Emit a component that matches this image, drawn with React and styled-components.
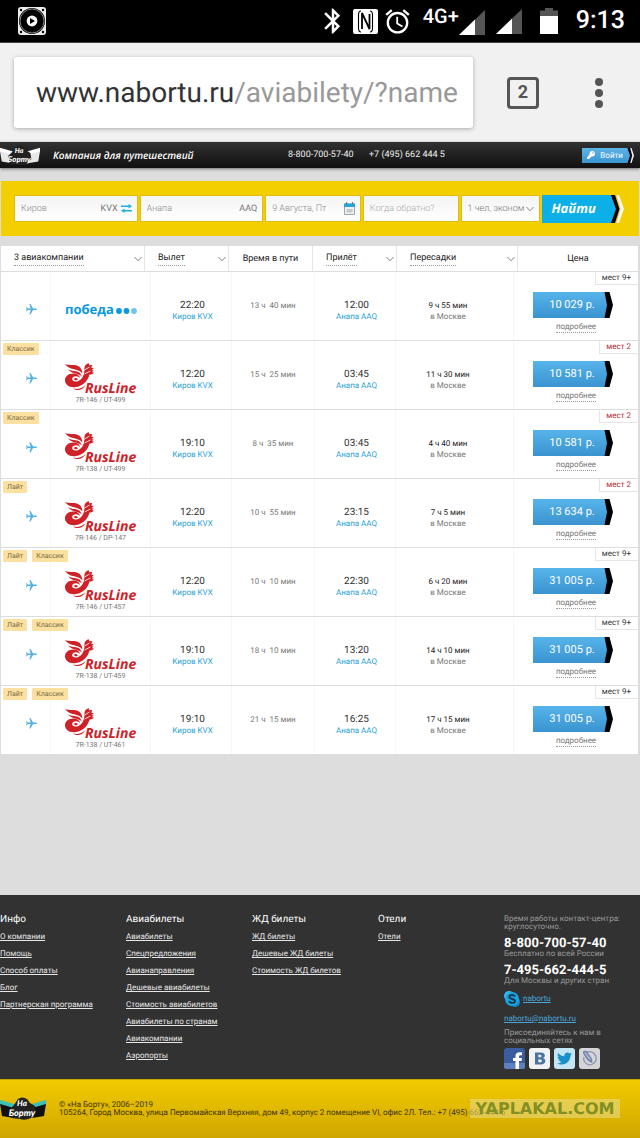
import React from 'react';
import styled, { createGlobalStyle } from 'styled-components';
import { MdAlarm, MdBluetooth, MdFlight } from 'react-icons/md';
import { FaKey, FaTwitter } from 'react-icons/fa';

const GlobalStyle = createGlobalStyle`
	* {
		box-sizing: border-box;
	}
	body {
		margin: 0;
		background: #dddddd;
		font-family: Roboto, sans-serif;
		font-size: 8px;
		color: #333;
		text-rendering: geometricPrecision;
	}
	button, input, select {
		font-family: inherit;
		margin: 0;
		padding: 0;
		border: 0;
		border-radius: 0;
		background: none;
		outline: none;
		text-rendering: inherit;
	}
`;

/* ---------- phone ---------- */

const StatusBar = styled.div`
	display: flex;
	align-items: center;
	justify-content: space-between;
	height: 43px;
	padding: 0 15px 0 18px;
	background: #000;
	border-bottom: 1px solid #444;
	color: #fff;
	svg {
		flex: none;
	}
`;

const StatusGroup = styled.div`
	display: flex;
	align-items: center;
	gap: ${p => p.$gap}px;
`;

const Network = styled.div`
	display: flex;
	align-items: flex-start;
	height: 30px;
	font-size: 20px;
	line-height: 20px;
	font-weight: 500;
	svg {
		margin-top: 4px;
	}
`;

const Clock = styled.div`
	font-size: 25px;
	line-height: 30px;
	font-weight: 500;
`;

const BrowserBar = styled.div`
	display: flex;
	align-items: center;
	height: 99px;
	padding: 0 37px 0 14px;
	background: #f1f1f1;
`;

const AddressBar = styled.label`
	flex: 1;
	min-width: 0;
	display: flex;
	align-items: center;
	height: 71px;
	padding: 0 14px 0 22px;
	background: #fff;
	border-radius: 3px;
	box-shadow: 0 1px 4px rgba(0, 0, 0, 0.3);
	font-size: 28px;
	color: #333;
`;

const AddressInput = styled.input`
	flex: 1;
	min-width: 0;
	font-size: 28px;
	color: #999;
`;

const TabsButton = styled.button`
	width: 32px;
	height: 32px;
	margin: 0 56px 0 34px;
	border: 3px solid #555;
	border-radius: 4px;
	color: #555;
	font-size: 18px;
	line-height: 26px;
	font-weight: 700;
`;

const MenuButton = styled.button`
	display: flex;
	flex-direction: column;
	gap: 3px;
	&::before, &::after, span {
		content: '';
		width: 8px;
		height: 8px;
		border-radius: 50%;
		background: #555;
	}
`;

/* ---------- site header ---------- */

const SiteHeader = styled.header`
	display: grid;
	grid-template-columns: 53fr 235fr 81fr 213fr 58fr;
	align-items: center;
	height: 26px;
	background: linear-gradient(#303030, #111);
	box-shadow: 0 1px 3px rgba(0, 0, 0, 0.5);
	color: #eee;
	font-size: 9px;
	svg {
		display: block;
	}
`;

const Slogan = styled.div`
	font-family: 'Open Sans', sans-serif;
	font-size: 10px;
	font-weight: 600;
	font-style: italic;
	white-space: nowrap;
	color: #fff;
`;

const LoginButton = styled.button`
	display: flex;
	align-items: center;
	width: 52px;
	height: 15px;
	color: #fff;
	font-size: 8px;
	span {
		flex: 1;
		display: flex;
		align-items: center;
		justify-content: space-between;
		height: 15px;
		padding: 0 4px 0 5px;
		background: linear-gradient(#5cb4e8, #3a94cf);
	}
`;

/* ---------- search ---------- */

const SearchForm = styled.form`
	display: grid;
	grid-template-columns: 124fr 124fr 96fr 96fr 80fr 82fr;
	gap: 2px;
	align-items: center;
	height: 55px;
	margin: 13px 1px 10px;
	padding: 0 15px 0 13px;
	background: #f3cf00;
`;

const Field = styled.label`
	display: flex;
	align-items: center;
	gap: ${p => (p.$tight ? 0 : 3)}px;
	min-width: 0;
	height: 27px;
	padding: 0 5px 0 6px;
	border: 1px solid #e0bd10;
	background: linear-gradient(#f4f4f4, #fff);
	color: #777;
	font-size: 9px;
	svg {
		flex: none;
	}
`;

const FieldInput = styled.input`
	flex: 1;
	min-width: 0;
	font-size: 9px;
	font-weight: 300;
	color: #888;
	&::placeholder {
		color: #aaa;
	}
`;

const FieldSelect = styled.select`
	flex: 1;
	min-width: 0;
	appearance: none;
	font-size: 9px;
	font-weight: 300;
	color: #777;
`;

const FindButton = styled.button`
	display: flex;
	height: 28px;
	color: #fff;
	font-family: 'Open Sans', sans-serif;
	font-size: 13px;
	line-height: 26px;
	font-weight: 700;
	font-style: italic;
	span {
		flex: 1;
		height: 28px;
		padding-right: 5px;
		background: #0cafe8;
	}
`;

/* ---------- results ---------- */

const Results = styled.table`
	display: block;
	margin: 0 2px 140px 1px;
	background: #fff;
	thead, tbody {
		display: block;
	}
`;

const HeadRow = styled.tr`
	display: grid;
	grid-template-columns: 144fr 84fr 84fr 84fr 121fr 120fr;
	height: 26px;
	border-bottom: 1px solid #ddd;
`;

const HeadCell = styled.th`
	display: flex;
	align-items: center;
	justify-content: ${p => (p.$plain ? 'center' : 'space-between')};
	padding: ${p => (p.$plain ? '0 3px' : '0 2px 0 13px')};
	border-right: 1px solid #e6e6e6;
	font-size: 9px;
	line-height: 12px;
	font-weight: 400;
	color: #222;
	&:last-child {
		border-right: 0;
	}
`;

const HeadButton = styled.button`
	border-bottom: 1px dotted #999;
	font-size: 9px;
	line-height: 13px;
	color: #222;
`;

const Row = styled.tr`
	display: grid;
	grid-template-columns: 50fr 100fr 81fr 83fr 81fr 118fr 124fr;
	position: relative;
	height: 69px;
	border-bottom: 1px solid #ddd;
`;

const Cell = styled.td`
	display: flex;
	flex-direction: column;
	align-items: center;
	padding: ${p => p.$top || 28}px ${p => p.$right || 0}px 0 ${p => p.$left || 0}px;
	border-right: 1px solid #f7f7f7;
	font-size: 8px;
	line-height: 11px;
	color: #777;
	&:last-child {
		border-right: 0;
	}
`;

const PlaneWrapper = styled.div`
	color: #4fb0e6;
	svg {
		display: block;
		transform: rotate(90deg);
	}
`;

const Time = styled.div`
	font-size: 10px;
	line-height: 12px;
	color: #333;
`;

const City = styled.div`
	line-height: 10px;
	color: #2a9fdc;
`;

const Duration = styled.div`
	white-space: pre;
	line-height: 12px;
`;

const Stops = styled.div`
	line-height: 10px;
	color: #222;
`;

const Flights = styled.div`
	font-size: 7px;
	line-height: 7px;
	color: #777;
`;

const Tags = styled.div`
	position: absolute;
	top: 2px;
	left: 2px;
	display: flex;
	gap: 5px;
`;

const Tag = styled.span`
	padding: 0 4px;
	border-radius: 1px;
	background: #fbe0a0;
	color: #7a6a45;
	font-size: 7px;
	line-height: 12px;
`;

const Seats = styled.div`
	position: absolute;
	top: 0;
	right: 0;
	padding: 0 7px 0 6px;
	border-left: 1px solid #e6e6e6;
	border-bottom: 1px solid #e6e6e6;
	line-height: 12px;
	color: ${p => (p.$few ? '#b5282d' : '#333')};
`;

const BuyButton = styled.button`
	display: flex;
	width: 80px;
	height: 26px;
	margin-right: 6px;
	color: #fff;
	font-size: 11px;
	line-height: 25px;
	span {
		flex: 1;
		padding-left: 8px;
		white-space: nowrap;
		background: linear-gradient(#57b4ea, #3a93d0);
	}
`;

const Details = styled.a`
	margin-top: 4px;
	border-bottom: 1px dotted #999;
	line-height: 10px;
	color: #777;
	text-decoration: none;
`;

/* ---------- footer ---------- */

const Footer = styled.footer`
	display: grid;
	grid-template-columns: 126fr 126fr 126fr 126fr 136fr;
	height: 184px;
	padding-top: 18px;
	background: #323232;
	color: #999;
`;

const FooterTitle = styled.h2`
	margin: 0 0 1px;
	font-size: 10px;
	line-height: 14px;
	font-weight: 400;
	color: #fff;
`;

const FooterLink = styled.a`
	display: block;
	line-height: 17px;
	color: #e6e6e6;
`;

const Contacts = styled.div`
	display: flex;
	flex-direction: column;
	align-items: flex-start;
	padding-top: 2px;
	line-height: 8px;
	a {
		color: #4aa5da;
	}
`;

const Phone = styled.div`
	margin-top: 6px;
	font-size: 13px;
	line-height: 13px;
	font-weight: 700;
	color: #fff;
`;

const Skype = styled.div`
	display: flex;
	align-items: center;
	gap: 3px;
	margin: 6px 0 8px;
`;

const Socials = styled.div`
	display: flex;
	gap: 4px;
	margin-top: 3px;
`;

const Invite = styled.div`
	margin-top: 6px;
`;

const Social = styled.a`
	display: flex;
	align-items: center;
	justify-content: center;
	width: 21px;
	height: 21px;
	border-radius: 3px;
	background: ${p => p.$bg};
`;

const BottomBar = styled.div`
	position: relative;
	display: flex;
	align-items: center;
	gap: 13px;
	height: 59px;
	border-top: 1px solid #c9a600;
	background: linear-gradient(#f2cb00, #cfa600);
	color: #3c3200;
	line-height: 8px;
	svg {
		flex: none;
	}
`;

const Watermark = styled.div`
	position: absolute;
	right: 20px;
	top: 19px;
	width: 150px;
	height: 19px;
	background: rgba(232, 216, 130, 0.6);
	color: #838f22;
	font-family: 'DejaVu Sans', sans-serif;
	font-size: 16px;
	line-height: 19px;
	font-weight: 700;
	text-align: center;
`;

/* ---------- drawings ---------- */

const SpeakerIcon = () => (
	<svg width="28" height="28" viewBox="0 0 28 28">
		<rect width="28" height="28" rx="3" fill="#eee" />
		<circle cx="14" cy="14" r="13" fill="#000" />
		<circle cx="14" cy="14" r="12" fill="none" stroke="#bbb" strokeWidth="0.7" />
		<g fill="#000">
			<circle cx="3" cy="3" r="1.2" />
			<circle cx="25" cy="3" r="1.2" />
			<circle cx="3" cy="25" r="1.2" />
			<circle cx="25" cy="25" r="1.2" />
		</g>
		<circle cx="14" cy="14" r="5.4" fill="#fff" />
		<path d="M12 11l5 3-5 3z" fill="#000" />
	</svg>
);

const NfcIcon = () => (
	<svg width="25" height="25" viewBox="0 0 25 25">
		<rect width="25" height="25" rx="2" fill="#fff" />
		<path
			d="M8 2Q5.500 2 5.500 6v13q0 4 2.500 4M17 2q2.500 0 2.500 4v13q0 4-2.500 4"
			fill="none"
			stroke="#000"
			strokeWidth="1.100"
		/>
		<path d="M9 20V4l7.500 16V5" fill="none" stroke="#000" strokeWidth="1.800" />
	</svg>
);

const SignalIcon = () => (
	<svg width="26" height="25" viewBox="0 0 26 25">
		<path d="M0 25L26 0v25z" fill="#555" />
		<path d="M0 25L16 9.600V25z" fill="#fff" />
	</svg>
);

const BatteryIcon = () => (
	<svg width="18" height="26" viewBox="0 0 18 26">
		<path d="M5 0h8v2.500h5V8H0V2.500h5z" fill="#555" />
		<path d="M0 8h18v18H0z" fill="#fff" />
	</svg>
);

const ChevronDown = () => (
	<svg width="8" height="6" viewBox="0 0 8 6">
		<path d="M0.500 1L4 4.800 7.500 1" fill="none" stroke="#888" />
	</svg>
);

const SwapIcon = () => (
	<svg width="11" height="9" viewBox="0 0 11 9">
		<path d="M0 2.300h9M2 6.700h9" stroke="#19b0e8" strokeWidth="1.400" />
		<path d="M7.500 0L11 2.300 7.500 4.600zM3.500 4.400L0 6.700 3.500 9z" fill="#19b0e8" />
	</svg>
);

const CalendarIcon = () => (
	<svg width="11" height="13" viewBox="0 0 11 13">
		<path d="M0.500 2h10v10.500h-10z" fill="#f2f2f2" stroke="#9aa5ad" />
		<path d="M0 1.500h11V5H0z" fill="#23a7da" />
		<path d="M2.500 0v3M8.500 0v3" stroke="#777" />
		<path d="M2.500 7h6v3.500h-6z" fill="#c3c9ce" />
	</svg>
);

// arrow tail shared by the login and search buttons
const Tail = ({ width, height, fill }) => (
	<svg width={width} height={height} viewBox="0 0 14 28" preserveAspectRatio="none">
		<path d="M0 0h2l5 14-5 14H0z" fill={fill} />
		<path d="M1 0h4l4.500 14L5 28H1l5-14z" fill="#000" />
		<path d="M6.500 0H9l5 14-5 14H6.500l4-14z" fill="#f4f4f4" />
	</svg>
);

const PriceTail = () => (
	<svg width="10" height="26" viewBox="0 0 10 26">
		<defs>
			<linearGradient id="tail" x2="0" y2="1">
				<stop stopColor="#57b4ea" />
				<stop offset="1" stopColor="#3a93d0" />
			</linearGradient>
		</defs>
		<path d="M0 0h3l3 13-3 13H0z" fill="url(#tail)" />
		<path d="M1.500 0h5L10 13 6.500 26h-5L4 13z" fill="#000" />
	</svg>
);

const Wings = ({ width, height, tip, wing }) => (
	<svg width={width} height={height} viewBox="0 0 46 24">
		<path d="M0 3l14 4h18l14-4v5l-14 4H14L0 8z" fill={tip} />
		<path d="M0 7l14 4h18l14-4-2 12-12 2H14L2 19z" fill={wing} />
		<path d="M18 2q4-3 9 0l3 4 5 3 1 7-5 5q-6 3-11 1l-9-1-2-8 5-5z" fill="#222" />
		<g fontFamily="Lato, sans-serif" fontWeight="900" fontStyle="italic" fill="#fff" textAnchor="middle">
			<text x="22" y="9" fontSize="8">На</text>
			<text x="22" y="19" fontSize="9">Борту</text>
		</g>
	</svg>
);

const PobedaLogo = () => (
	<svg width="72" height="19" viewBox="0 0 72 19">
		<text x="0" y="14" fontFamily="Open Sans, sans-serif" fontWeight="700" fontSize="13" fill="#0a98de">победа</text>
		<circle cx="54" cy="11" r="2.900" fill="#0a98de" />
		<circle cx="61.500" cy="11" r="2.900" fill="#0a98de" />
		<circle cx="69" cy="11" r="2.900" fill="#74c3ee" />
	</svg>
);

const RusLineLogo = () => (
	<svg width="72" height="34" viewBox="0 0 72 34">
		<g fill="#cf2128">
			<path d="M0 1c5 2 10-.5 14 2.500 2 1.500 3.500 4 3.300 7C14 5 5 8 0 1z" />
			<path d="M3 6c4 3 8 1 12 4l2 3.500C12.500 9.500 6.500 11.500 3 6z" />
			<path d="M9.500 10.500C4 10 0 13 0 17.200 0 22 5 25 11 24c7-1 12-6 13.500-12.500 1.800 0 3.800-.8 4.300-1.800l-2-.7 2-1.300-2-.7 2-2-2.500-.3 1-2.700-3 .3L23.500 0l-2.300 1.500C18.500 3.500 20 7 19 10.500c-1 4-3.500 7.500-7.500 8-3 .3-4.700-1.200-4.300-3 .5-1.700 2.800-2.500 5-2 1.500.3 2.500 1 3 2C14.700 12.500 12.500 10.800 9.500 10.500z" />
			<path d="M9 15.700c1.200-1.200 3.500-.6 3.800.8-.9 1.300-3.300 1-3.800-.8z" />
			<path d="M8 25.500c4 1 9 .3 12.500-3.500C18 27 12.500 28.500 8 25.500z" />
		</g>
		<path d="M19.500 7l5-3M19.500 11l6-3" stroke="#fff" strokeWidth="0.800" />
		<text x="20" y="30" fontFamily="Open Sans, sans-serif" fontWeight="700" fontStyle="italic" fontSize="14" fill="#cf2128">RusLine</text>
	</svg>
);

const SkypeIcon = () => (
	<svg width="16" height="16" viewBox="0 0 16 16">
		<circle cx="5" cy="5" r="5" fill="#35bdf0" />
		<circle cx="11" cy="11" r="5" fill="#0a8fd0" />
		<circle cx="8" cy="8" r="7" fill="#18a5e2" />
		<path d="M11 5.500C10 3.500 5.300 3.500 5.300 6c0 2.500 5.700 1.300 5.700 4 0 2.500-5 2.500-6 .2" fill="none" stroke="#173a4c" strokeWidth="2" />
	</svg>
);

const FacebookMark = () => (
	<svg width="21" height="21" viewBox="0 0 21 21">
		<path d="M0 15h21v4q0 2-2 2H2q-2 0-2-2z" fill="#5f7fc0" />
		<path d="M11.500 21v-8H9v-3h2.500V8c0-3 2-4.200 6.500-3.600v2.800c-2-.2-3 0-3 1.500V10h3l-.5 3H15v8z" fill="#fff" />
	</svg>
);

const VkMark = () => (
	<svg width="21" height="21" viewBox="0 0 21 21">
		<path
			d="M6 4.500h5.500c3 0 4.300 1 4.300 3 0 1.300-.8 2.200-2 2.600 1.600.4 2.500 1.400 2.500 3 0 2.300-1.700 3.400-4.600 3.400H6zm3.300 2.200v2.600h1.400c2.400 0 2.400-2.600 0-2.600zm0 4.700v2.800h1.700c2.600 0 2.600-2.800 0-2.800z"
			fill="#4d73a0"
			fillRule="evenodd"
		/>
	</svg>
);

const JournalMark = () => (
	<svg width="21" height="21" viewBox="0 0 21 21">
		<path d="M8 4c6-1.500 10 3 9 8-1 4-6 6-9 4s-4-4-3-7" fill="none" stroke="#8b95b0" strokeWidth="1.300" />
		<path d="M4.500 3.500L7 3l5.500 7.500.5 4-4-2-4.500-7z" fill="#7c8bb4" stroke="#5b6a96" strokeWidth="0.600" />
		<path d="M6 4.500l5 7" stroke="#cdd5ea" />
	</svg>
);

/* ---------- data ---------- */

const flights = [
	{ depart: '22:20', duration: '13 ч  40 мин', arrive: '12:00', stop: '9 ч 55 мин', seats: '9+', price: '10 029 р.', tags: [] },
	{ flight: '7R-146 / UT-499', depart: '12:20', duration: '15 ч  25 мин', arrive: '03:45', stop: '11 ч 30 мин', seats: '2', price: '10 581 р.', tags: ['Классик'] },
	{ flight: '7R-138 / UT-499', depart: '19:10', duration: '8 ч  35 мин', arrive: '03:45', stop: '4 ч 40 мин', seats: '2', price: '10 581 р.', tags: ['Классик'] },
	{ flight: '7R-146 / DP-147', depart: '12:20', duration: '10 ч  55 мин', arrive: '23:15', stop: '7 ч 5 мин', seats: '2', price: '13 634 р.', tags: ['Лайт'] },
	{ flight: '7R-146 / UT-457', depart: '12:20', duration: '10 ч  10 мин', arrive: '22:30', stop: '6 ч 20 мин', seats: '9+', price: '31 005 р.', tags: ['Лайт', 'Классик'] },
	{ flight: '7R-138 / UT-459', depart: '19:10', duration: '18 ч  10 мин', arrive: '13:20', stop: '14 ч 10 мин', seats: '9+', price: '31 005 р.', tags: ['Лайт', 'Классик'] },
	{ flight: '7R-138 / UT-461', depart: '19:10', duration: '21 ч  15 мин', arrive: '16:25', stop: '17 ч 15 мин', seats: '9+', price: '31 005 р.', tags: ['Лайт', 'Классик'] },
];

const columns = [
	{ title: '3 авиакомпании', sortable: true },
	{ title: 'Вылет', sortable: true },
	{ title: 'Время в пути' },
	{ title: 'Прилёт', sortable: true },
	{ title: 'Пересадки', sortable: true },
	{ title: 'Цена' },
];

const footerMenu = [
	{ title: 'Инфо', links: ['О компании', 'Помощь', 'Способ оплаты', 'Блог', 'Партнерская программа'] },
	{
		title: 'Авиабилеты',
		links: [
			'Авиабилеты',
			'Спецпредложения',
			'Авианаправления',
			'Дешевые авиабилеты',
			'Стоимость авиабилетов',
			'Авиабилеты по странам',
			'Авиакомпании',
			'Аэропорты',
		],
	},
	{ title: 'ЖД билеты', links: ['ЖД билеты', 'Дешевые ЖД билеты', 'Стоимость ЖД билетов'] },
	{ title: 'Отели', links: ['Отели'] },
];

function FlightRow({ item }) {
	return (
		<Row>
			<Cell $top={31} $left={11}>
				<PlaneWrapper>
					<MdFlight size={13} />
				</PlaneWrapper>
				<Tags>
					{item.tags.map(tag => (
						<Tag key={tag}>{tag}</Tag>
					))}
				</Tags>
			</Cell>
			<Cell $top={item.flight ? 22 : 28}>
				{item.flight ? <RusLineLogo /> : <PobedaLogo />}
				{item.flight && <Flights>{item.flight}</Flights>}
			</Cell>
			<Cell $left={3}>
				<Time>{item.depart}</Time>
				<City>Киров KVX</City>
			</Cell>
			<Cell>
				<Duration>{item.duration}</Duration>
			</Cell>
			<Cell $left={3}>
				<Time>{item.arrive}</Time>
				<City>Анапа AAQ</City>
			</Cell>
			<Cell $top={29} $right={13}>
				<Stops>{item.stop}</Stops>
				<div>в Москве</div>
			</Cell>
			<Cell $top={20}>
				<Seats $few={item.seats === '2'}>мест {item.seats}</Seats>
				<BuyButton type="button">
					<span>{item.price}</span>
					<PriceTail />
				</BuyButton>
				<Details href="#">подробнее</Details>
			</Cell>
		</Row>
	);
}

export default function App() {
	return (
		<>
			<GlobalStyle />
			<StatusBar>
				<SpeakerIcon />
				<StatusGroup $gap={18}>
					<StatusGroup $gap={11}>
						<StatusGroup $gap={5}>
							<MdBluetooth size={30} />
							<NfcIcon />
							<MdAlarm size={29} />
						</StatusGroup>
						<Network>
							4G+
							<SignalIcon />
						</Network>
						<SignalIcon />
					</StatusGroup>
					<BatteryIcon />
					<Clock>9:13</Clock>
				</StatusGroup>
			</StatusBar>
			<BrowserBar>
				<AddressBar>
					www.nabortu.ru
					<AddressInput type="text" defaultValue="/aviabilety/?name" />
				</AddressBar>
				<TabsButton type="button">2</TabsButton>
				<MenuButton type="button" aria-label="Меню">
					<span />
				</MenuButton>
			</BrowserBar>

			<SiteHeader>
				<Wings width={40} height={21} tip="#fff" wing="#e8e8e8" />
				<Slogan>Компания для путешествий</Slogan>
				<div>8-800-700-57-40</div>
				<div>+7 (495) 662 444 5</div>
				<LoginButton type="button">
					<span>
						<FaKey size={8} />
						Войти
					</span>
					<Tail width={7} height={15} fill="#4aa5dc" />
				</LoginButton>
			</SiteHeader>

			<main>
				<SearchForm>
					<Field>
						<FieldInput type="text" aria-label="Откуда" defaultValue="Киров" />
						KVX
						<SwapIcon />
					</Field>
					<Field>
						<FieldInput type="text" aria-label="Куда" defaultValue="Анапа" />
						AAQ
					</Field>
					<Field>
						<FieldInput type="text" aria-label="Дата вылета" defaultValue="9 Августа, Пт" />
						<CalendarIcon />
					</Field>
					<Field>
						<FieldInput type="text" aria-label="Дата возвращения" placeholder="Когда обратно?" />
					</Field>
					<Field $tight>
						<FieldSelect aria-label="Пассажиры">
							<option>1 чел, эконом</option>
						</FieldSelect>
						<ChevronDown />
					</Field>
					<FindButton type="button">
						<span>Найти</span>
						<Tail width={14} height={28} fill="#0cafe8" />
					</FindButton>
				</SearchForm>

				<Results>
					<thead>
						<HeadRow>
							{columns.map(column => (
								<HeadCell key={column.title} $plain={!column.sortable}>
									{column.sortable ? <HeadButton type="button">{column.title}</HeadButton> : column.title}
									{column.sortable && <ChevronDown />}
								</HeadCell>
							))}
						</HeadRow>
					</thead>
					<tbody>
						{flights.map((item, i) => (
							<FlightRow key={i} item={item} />
						))}
					</tbody>
				</Results>
			</main>

			<Footer>
				{footerMenu.map(group => (
					<nav key={group.title}>
						<FooterTitle>{group.title}</FooterTitle>
						{group.links.map(link => (
							<FooterLink key={link} href="#">{link}</FooterLink>
						))}
					</nav>
				))}
				<Contacts>
					<div>
						Время работы контакт-центра:
						<br />
						круглосуточно.
					</div>
					<Phone>8-800-700-57-40</Phone>
					<div>Бесплатно по всей России</div>
					<Phone>7-495-662-444-5</Phone>
					<div>Для Москвы и других стран</div>
					<Skype>
						<SkypeIcon />
						<a href="#">nabortu</a>
					</Skype>
					<a href="#">nabortu@nabortu.ru</a>
					<Invite>
						Присоединяйтесь к нам в
						<br />
						социальных сетях
					</Invite>
					<Socials>
						<Social href="#" aria-label="Facebook" $bg="#3b5c9f">
							<FacebookMark />
						</Social>
						<Social href="#" aria-label="VK" $bg="#f0f2f4">
							<VkMark />
						</Social>
						<Social href="#" aria-label="Twitter" $bg="#c3e6f5">
							<FaTwitter size={15} color="#1a8fc8" />
						</Social>
						<Social href="#" aria-label="LiveJournal" $bg="#d5d5d8">
							<JournalMark />
						</Social>
					</Socials>
				</Contacts>
			</Footer>
			<BottomBar>
				<Wings width={46} height={24} tip="#3cc0b8" wing="#111" />
				<div>
					© «На Борту», 2006–2019
					<br />
					105264, Город Москва, улица Первомайская Верхняя, дом 49, корпус 2 помещение VI, офис 2Л. Тел.: +7 (495) 662-444-5
				</div>
				<Watermark>YAPLAKAL.COM</Watermark>
			</BottomBar>
		</>
	);
}
